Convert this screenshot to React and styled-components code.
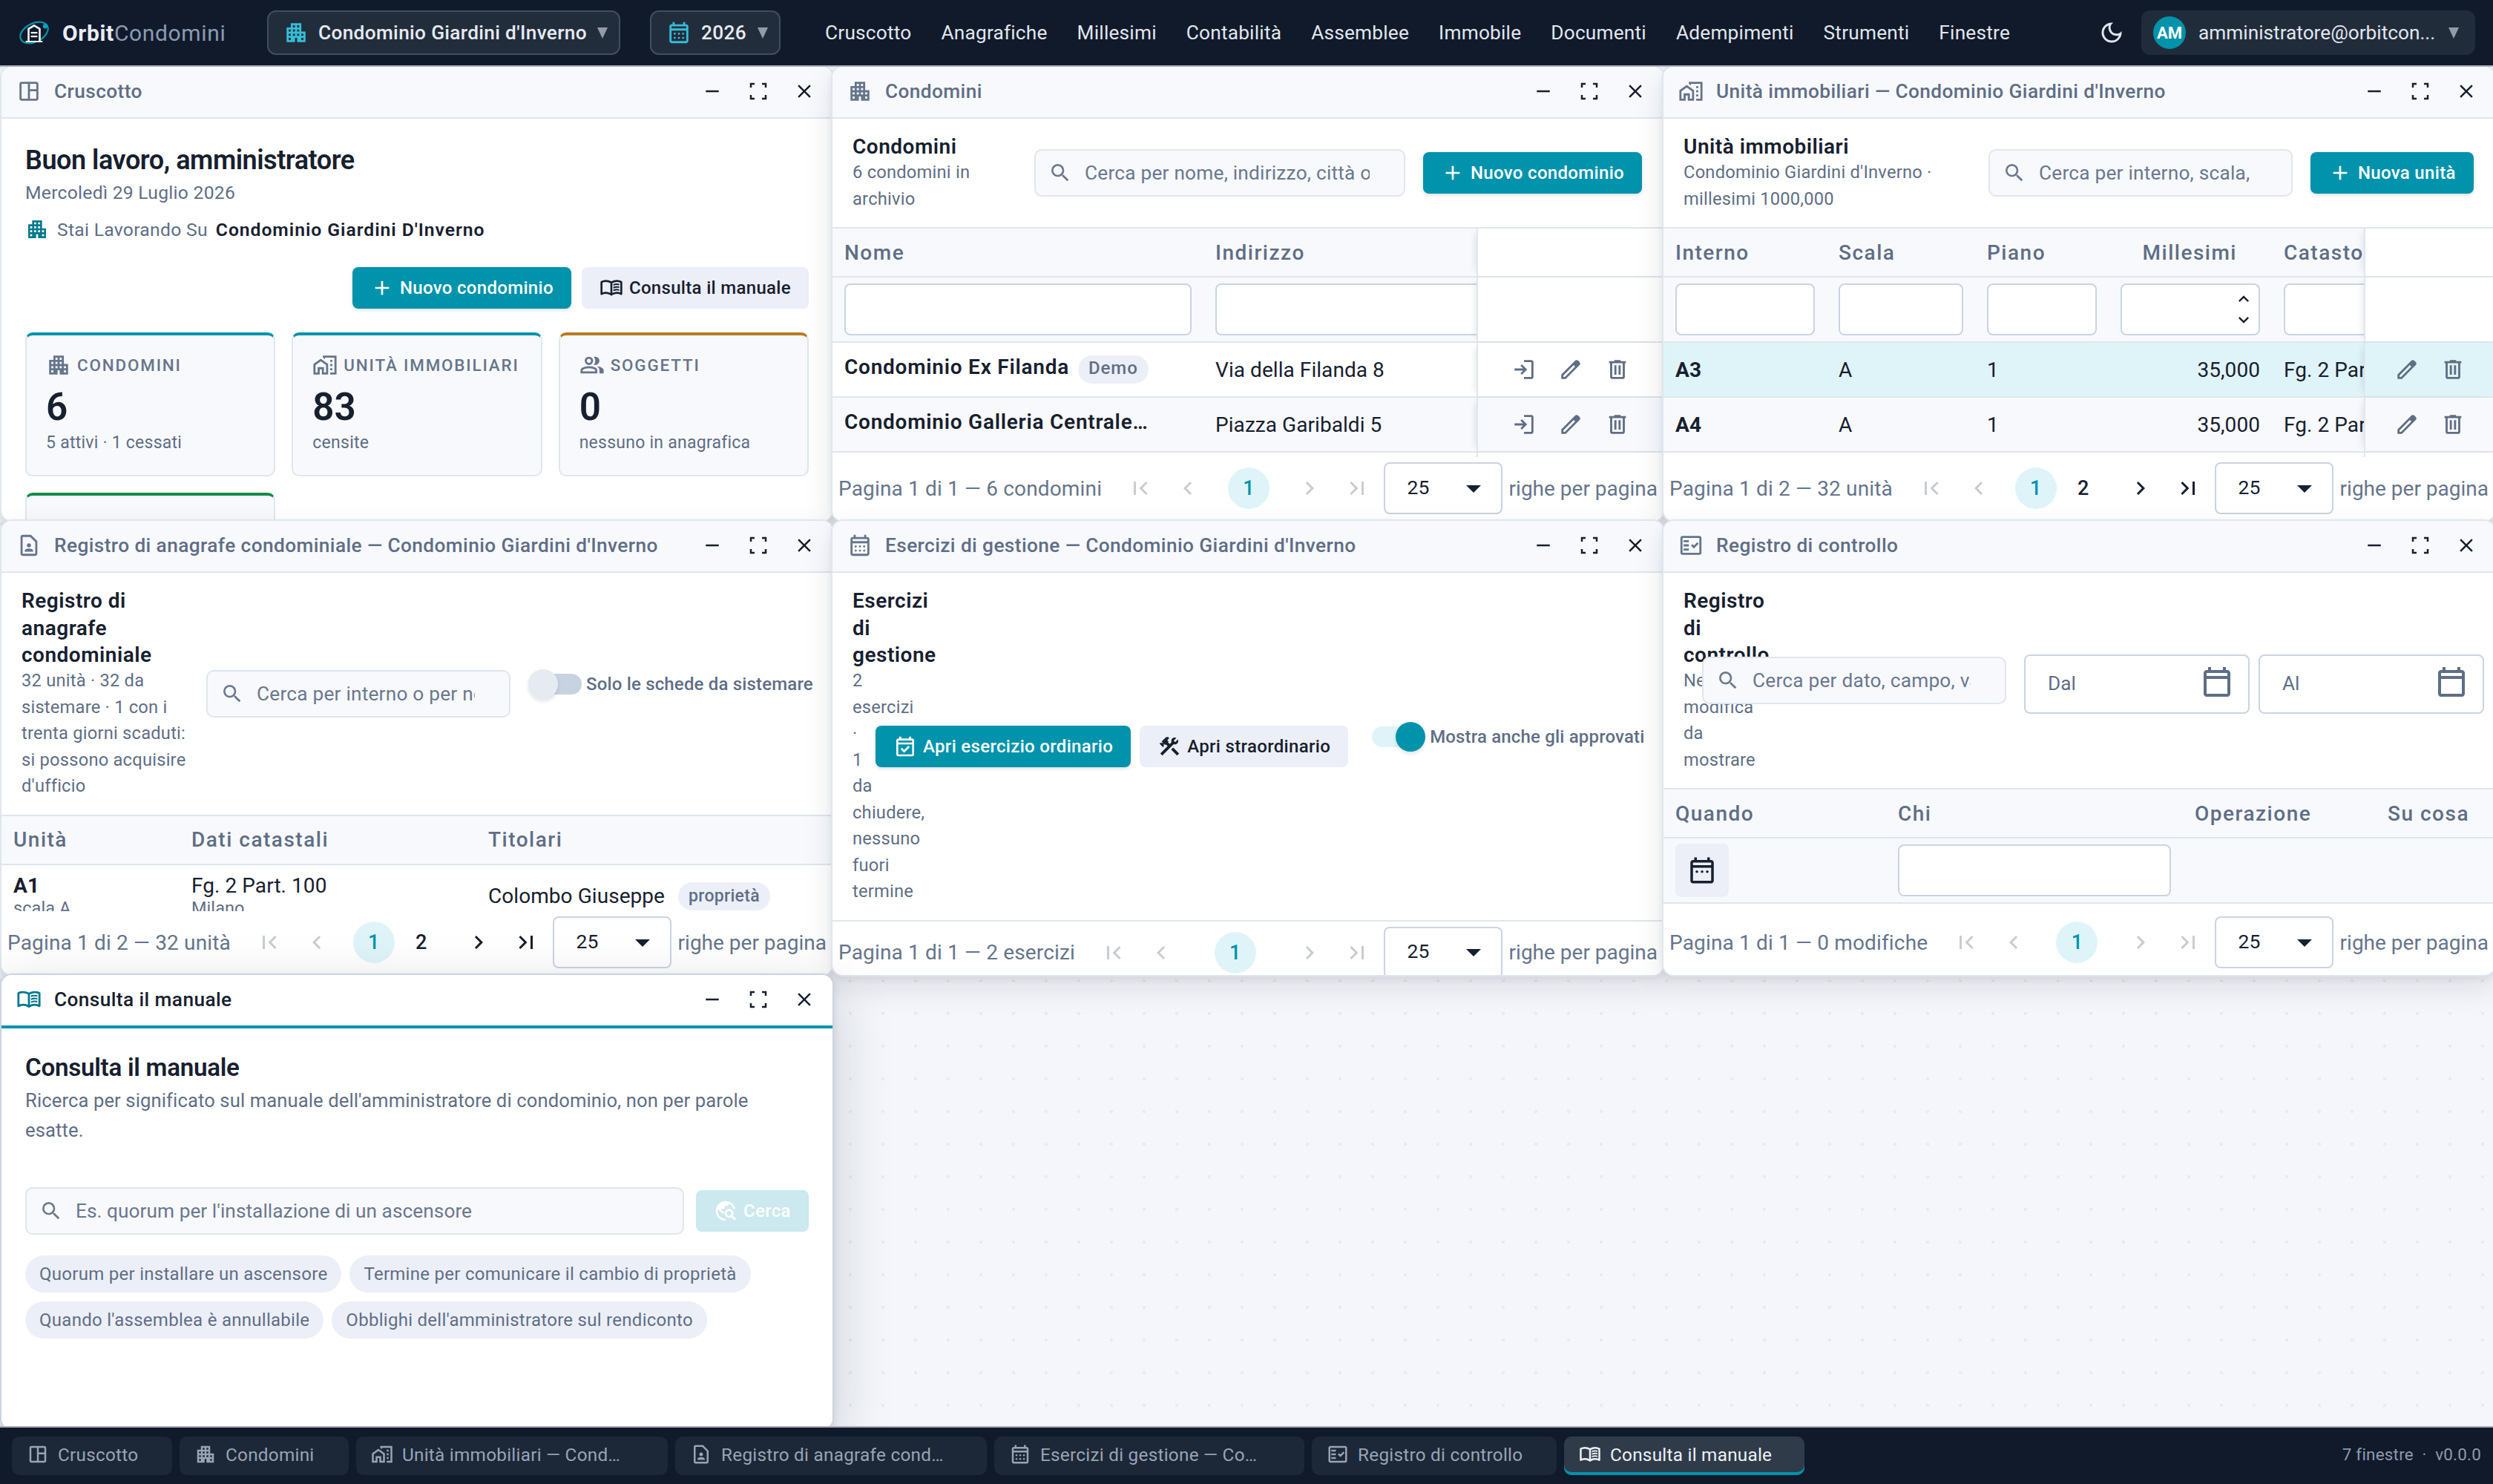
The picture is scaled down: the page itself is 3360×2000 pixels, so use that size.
import styled, { createGlobalStyle, css } from "styled-components";
import {
  MdApartment,
  MdOutlineSpaceDashboard,
  MdOutlineHomeWork,
  MdOutlineContactPage,
  MdOutlineFactCheck,
  MdSearch,
  MdAdd,
  MdConstruction,
  MdTravelExplore,
  MdFirstPage,
  MdLastPage,
  MdChevronLeft,
  MdChevronRight,
  MdArrowDropDown,
  MdExpandLess,
  MdExpandMore,
  MdOutlineDarkMode,
} from "react-icons/md";

const ink = "#17202e";
const muted = "#5f6e85";
const teal = "#0093ab";
const line = "#dfe6ee";
const soft = "#f8f9fd";
const pale = "#eceff8";
const field = "#c9d4e3";

const GlobalStyle = createGlobalStyle`
  * {
    box-sizing: border-box;
  }
  body {
    margin: 0;
    background: #f4f6fb;
    color: ${ink};
    font-family: Roboto, "Liberation Sans", sans-serif;
    font-size: 28px;
  }
  h1, h2, h3, p {
    margin: 0;
  }
  svg {
    display: block;
    flex: none;
  }
`;

/* ---------- icons ---------- */

const Glyph = ({ size = 34, children }) => (
  <svg width={size} height={size} viewBox="0 -960 960 960" fill="currentColor">
    {children}
  </svg>
);

const dot = (x, y) => <circle key={`${x}${y}`} cx={x} cy={y} r="40" />;

const CalendarFrame = () => (
  <path d="M200-80q-33 0-56.5-23.5T120-160v-560q0-33 23.5-56.5T200-800h40v-80h80v80h320v-80h80v80h40q33 0 56.5 23.5T840-720v560q0 33-23.5 56.5T760-80H200Zm0-80h560v-400H200v400Zm0-480h560v-80H200v80Z" />
);

const CalendarIcon = ({ size = 48 }) => (
  <Glyph size={size}>
    <CalendarFrame />
  </Glyph>
);

const MonthIcon = ({ size }) => (
  <Glyph size={size}>
    <CalendarFrame />
    {[-440, -280].map((y) => [320, 480, 640].map((x) => dot(x, y)))}
  </Glyph>
);

const RangeIcon = ({ size }) => (
  <Glyph size={size}>
    <CalendarFrame />
    {[320, 480, 640].map((x) => dot(x, -440))}
  </Glyph>
);

const CheckCalendarIcon = ({ size }) => (
  <Glyph size={size}>
    <CalendarFrame />
    <path d="m438-225-142-142 58-58 84 84 168-168 58 58-226 226Z" />
  </Glyph>
);

const BookIcon = ({ size }) => (
  <Glyph size={size}>
    <path d="M560-564v-68q33-14 67.5-21t72.5-7q26 0 51 4t49 10v64q-24-9-48.5-13.5T700-600q-38 0-73 9.5T560-564Zm0 220v-68q33-14 67.5-21t72.5-7q26 0 51 4t49 10v64q-24-9-48.5-13.5T700-380q-38 0-73 9t-67 27Zm0-110v-68q33-14 67.5-21t72.5-7q26 0 51 4t49 10v64q-24-9-48.5-13.5T700-490q-38 0-73 9.5T560-454ZM260-320q47 0 91.5 10.5T440-278v-394q-41-24-87-36t-93-12q-36 0-71.5 7T120-692v396q35-12 69.5-18t70.5-6Zm260 42q44-21 88.5-31.5T700-320q36 0 70.5 6t69.5 18v-396q-33-14-68.5-21t-71.5-7q-47 0-93 12t-87 36v394Zm-40 118q-48-38-104-59t-116-21q-42 0-82.5 11T100-198q-21 11-40.5-1T40-234v-482q0-11 5.5-21T62-752q46-24 96-36t102-12q58 0 113.5 15T480-740q51-30 106.5-45T700-800q52 0 102 12t96 36q11 5 16.5 15t5.5 21v482q0 23-19.5 35t-40.5 1q-37-20-77.5-31T700-240q-60 0-116 21t-104 59Z" />
  </Glyph>
);

const GroupIcon = ({ size }) => (
  <Glyph size={size}>
    <path d="M40-160v-112q0-34 17.5-62.5T104-378q62-31 126-46.5T360-440q66 0 130 15.5T616-378q29 15 46.5 43.5T680-272v112H40Zm720 0v-120q0-44-24.5-84.5T666-434q51 6 96 20.5t84 35.5q36 20 55 44.5t19 53.5v120H760ZM360-480q-66 0-113-47t-47-113q0-66 47-113t113-47q66 0 113 47t47 113q0 66-47 113t-113 47Zm400-160q0 66-47 113t-113 47q-11 0-28-2.5t-28-5.5q27-32 41.5-71t14.5-81q0-42-14.5-81T544-792q14-5 28-6.5t28-1.5q66 0 113 47t47 113ZM120-240h480v-32q0-11-5.5-20T580-306q-54-27-109-40.5T360-360q-56 0-111 13.5T140-306q-9 5-14.5 14t-5.5 20v32Zm240-320q33 0 56.5-23.5T440-640q0-33-23.5-56.5T360-720q-33 0-56.5 23.5T280-640q0 33 23.5 56.5T360-560Z" />
  </Glyph>
);

const MinimizeIcon = () => (
  <Glyph size={30}>
    <path d="M200-440v-80h560v80H200Z" />
  </Glyph>
);

const MaximizeIcon = () => (
  <Glyph size={30}>
    <path d="M120-120v-200h80v120h120v80H120Zm520 0v-80h120v-120h80v200H640ZM120-640v-200h200v80H200v120h-80Zm640 0v-120H640v-80h200v200h-80Z" />
  </Glyph>
);

const CloseIcon = () => (
  <Glyph size={30}>
    <path d="m256-200-56-56 224-224-224-224 56-56 224 224 224-224 56 56-224 224 224 224-56 56-224-224-224 224Z" />
  </Glyph>
);

const EnterIcon = () => (
  <Glyph>
    <path d="M480-120v-80h280v-560H480v-80h280q33 0 56.5 23.5T840-760v560q0 33-23.5 56.5T760-120H480Zm-80-160-55-58 102-102H120v-80h327L345-622l55-58 200 200-200 200Z" />
  </Glyph>
);

const EditIcon = () => (
  <Glyph>
    <path d="M200-200h57l391-391-57-57-391 391v57Zm-80 80v-170l528-527q12-11 26.5-17t30.5-6q16 0 31 6t26 18l55 56q12 11 17.5 26t5.5 30q0 16-5.5 30.5T817-647L290-120H120Zm640-584-56-56 56 56Zm-141 85-28-29 57 57-29-28Z" />
  </Glyph>
);

const DeleteIcon = () => (
  <Glyph>
    <path d="M280-120q-33 0-56.5-23.5T200-200v-520h-40v-80h200v-40h240v40h200v80h-40v520q0 33-23.5 56.5T680-120H280Zm400-600H280v520h400v-520ZM360-280h80v-360h-80v360Zm160 0h80v-360h-80v360Z" />
  </Glyph>
);

const Logo = () => (
  <svg width="40" height="40" viewBox="0 0 40 40" fill="none">
    <ellipse cx="20" cy="20" rx="20" ry="12.4" transform="rotate(-27 20 20)" stroke="#0795ad" strokeWidth="2.2" />
    <circle cx="35" cy="11.3" r="3.2" fill="#0ba3bd" />
    <path d="M12.5 31.5V14.8L20 10.4l7.5 4.4v16.7" fill="#101a2b" stroke="#f1f4f8" strokeWidth="2.6" strokeLinejoin="round" />
    <path d="M9.5 32h21M16.5 20.2h7M16.5 25.2h7" stroke="#f1f4f8" strokeWidth="2.2" strokeLinecap="round" />
  </svg>
);

const Caret = () => (
  <svg width="14" height="15" viewBox="0 0 14 15" fill="#949ba6">
    <path d="M0 0h14L7 15z" />
  </svg>
);

/* ---------- top bar ---------- */

const Shell = styled.div`
  width: 3360px;
  height: 2000px;
  display: flex;
  flex-direction: column;
  overflow: hidden;
`;

const TopBar = styled.header`
  height: 88px;
  flex: none;
  display: flex;
  align-items: center;
  padding: 0 24px 0 26px;
  background: #101a2b;
  color: #e1e6ee;
  font-size: 26.24px;
  letter-spacing: 0.21px;
  position: relative;
  z-index: 20;
  box-shadow: 0 2px 0 #a8acb3;
`;

const Brand = styled.div`
  width: 334px;
  display: flex;
  align-items: center;
  gap: 18px;
  font-size: 30px;
  letter-spacing: 0.65px;
  color: #8b9ab3;

  b {
    color: #e9edf4;
  }
`;

const Picker = styled.button`
  height: 60px;
  width: ${(p) => p.$w}px;
  margin-right: 40px;
  padding: 0 15px 0 20px;
  display: flex;
  align-items: center;
  gap: 13px;
  border: 2px solid #434e5c;
  border-radius: 12px;
  background: #222d3c;
  color: #e6eaf1;
  font: inherit;
  font-weight: 470;
  letter-spacing: 0.33px;
  white-space: nowrap;

  > svg:first-child {
    color: #35bdd7;
  }
  > svg:last-child {
    margin-left: auto;
  }
`;

const Nav = styled.nav`
  display: flex;
  flex: 1;

  a {
    padding: 0 20px;
  }
`;

const User = styled.div`
  width: 450px;
  height: 60px;
  margin-left: 22px;
  padding: 0 22px 0 16px;
  display: flex;
  align-items: center;
  background: #212c3b;
  border-radius: 12px;
  letter-spacing: 0;

  > svg {
    margin-left: auto;
  }
`;

const Avatar = styled.span`
  width: 44px;
  height: 44px;
  margin-right: 17px;
  border-radius: 50%;
  display: grid;
  place-items: center;
  background: ${teal};
  color: #fff;
  font-size: 22px;
  font-weight: 700;
`;

/* ---------- desktop and windows ---------- */

const Desktop = styled.main`
  flex: 1;
  position: relative;
  background: radial-gradient(circle at 2px 2px, #e8eaee 2px, transparent 2.4px) 0 0 / 44px 44px #f4f6fb;
`;

const Frame = styled.section`
  position: absolute;
  left: ${(p) => p.$col * 1120}px;
  top: ${(p) => p.$row * 612}px;
  width: 1124px;
  height: 616px;
  display: flex;
  flex-direction: column;
  overflow: hidden;
  background: #fff;
  border: 2px solid ${(p) => (p.$active ? "#c9d4e3" : line)};
  border-radius: 16px;
  box-shadow: ${(p) =>
    p.$active
      ? "0 4px 12px rgba(16, 24, 40, 0.08), 0 24px 80px rgba(16, 24, 40, 0.18)"
      : "0 4px 8px rgba(16, 24, 40, 0.06), 0 16px 40px rgba(16, 24, 40, 0.1)"};
`;

const TitleBar = styled.div`
  flex: none;
  height: ${(p) => (p.$active ? 72 : 70)}px;
  padding: 0 8px 2px 20px;
  display: flex;
  align-items: center;
  gap: 17px;
  border-bottom: ${(p) => (p.$active ? `4px solid ${teal}` : `2px solid ${line}`)};
  background: ${(p) => (p.$active ? "#fff" : soft)};
  color: ${(p) => (p.$active ? ink : muted)};
  font-size: 26.24px;
  font-weight: ${(p) => (p.$active ? 520 : 470)};
  letter-spacing: 0.41px;

  > svg {
    color: ${(p) => (p.$active ? "#067a8c" : "#66758b")};
  }
`;

const Controls = styled.div`
  margin-left: auto;
  display: flex;
  gap: 2px;
  color: ${ink};

  span {
    width: 60px;
    display: grid;
    place-items: center;
  }
`;

function Window({ icon: Icon, title, col, row, active, children }) {
  return (
    <Frame $col={col} $row={row} $active={active}>
      <TitleBar $active={active}>
        <Icon size={34} />
        {title}
        <Controls>
          <span><MinimizeIcon /></span>
          <span><MaximizeIcon /></span>
          <span><CloseIcon /></span>
        </Controls>
      </TitleBar>
      {children}
    </Frame>
  );
}

/* ---------- shared parts ---------- */

const Button = styled.button`
  height: 56px;
  flex: none;
  padding: 0 24px;
  display: flex;
  align-items: center;
  gap: 8px;
  border: 0;
  border-radius: 8px;
  font: 470 24px Roboto, sans-serif;
  letter-spacing: 0.32px;
  white-space: nowrap;
  background: ${pale};
  color: ${ink};

  ${(p) =>
    p.$primary &&
    css`
      background: ${teal};
      color: #fff;
      box-shadow: 0 2px 5px rgba(16, 24, 40, 0.14);
    `}
  ${(p) =>
    p.$disabled &&
    css`
      width: 152px;
      background: #cbe9ee;
      color: #fff;
    `}
`;

const SearchField = styled.div`
  height: 64px;
  width: ${(p) => p.$w}px;
  flex: none;
  padding: 0 46px 0 17px;
  display: flex;
  align-items: center;
  gap: 17px;
  border: 2px solid ${line};
  border-radius: 10px;
  background: ${soft};
  color: #6a788e;
  font-size: 26.24px;
  letter-spacing: ${(p) => (p.$w > 500 ? 0.05 : 0.22)}px;

  span {
    flex: 1;
    overflow: hidden;
    white-space: nowrap;
  }
`;

const Search = ({ width, children }) => (
  <SearchField $w={width}>
    <MdSearch size={32} />
    <span>{children}</span>
  </SearchField>
);

const Chip = styled.span`
  height: 38px;
  padding: 0 14px;
  display: inline-flex;
  align-items: center;
  border-radius: 19px;
  background: ${pale};
  color: ${muted};
  font-size: 23px;
  font-weight: 500;
  letter-spacing: 0.3px;
`;

const ToolBar = styled.div`
  flex: none;
  display: flex;
  align-items: center;
  padding: 20px 0 20px 27px;
  border-bottom: 2px solid ${line};
`;

const Titles = styled.div`
  width: ${(p) => p.$w}px;
  flex: none;
  padding-right: 24px;

  h2 {
    font-size: 28px;
    font-weight: 600;
    line-height: 36.5px;
    letter-spacing: 0.5px;
  }
  p {
    margin-top: -1.5px;
    font-size: 23.7px;
    line-height: 35.5px;
    letter-spacing: 0.22px;
    color: ${muted};
  }
`;

const Tools = styled.div`
  flex: none;
  display: flex;
  align-items: center;
  gap: ${(p) => p.$gap || 24}px;
  position: relative;
`;

const SwitchLabel = styled.label`
  display: flex;
  align-items: center;
  gap: ${(p) => (p.$on ? 6 : 0)}px;
  margin: 0 0 25px ${(p) => (p.$on ? 12 : 0)}px;
  font-size: 24px;
  font-weight: 500;
  letter-spacing: 0.17px;
  color: ${muted};
  white-space: nowrap;
`;

const Track = styled.span`
  width: 64px;
  height: 28px;
  margin: 0 8px;
  margin-right: ${(p) => (p.$on ? 8 : 6)}px;
  border-radius: 14px;
  display: flex;
  align-items: center;
  justify-content: ${(p) => (p.$on ? "flex-end" : "flex-start")};
  background: ${(p) => (p.$on ? "#dff4f8" : "#c8d3e1")};

  &::after {
    content: "";
    width: 40px;
    height: 40px;
    flex: none;
    margin: 0 -8px;
    border-radius: 50%;
    background: ${(p) => (p.$on ? teal : "#e6ebf2")};
    box-shadow: 0 3px 5px rgba(16, 24, 40, 0.12);
  }
`;

const DateField = styled.div`
  width: 304px;
  height: 80px;
  margin-top: 10px;
  padding: 0 18px 2px 30px;
  display: flex;
  align-items: center;
  justify-content: space-between;
  border: 2px solid ${field};
  border-radius: 8px;
  background: #fff;
  color: ${muted};
  font-size: 26.24px;

  svg {
    margin-top: -4px;
  }
`;

/* ---------- table ---------- */

const Table = styled.div`
  flex: 1;
  min-height: 0;
  overflow: hidden;
  display: flex;
  flex-direction: column;
`;

const Row = styled.div`
  flex: none;
  height: ${(p) => p.$h || 74}px;
  display: flex;
  border-bottom: 2px solid ${line};
  background: ${(p) => p.$bg || "#fff"};
`;

const Cells = styled.div`
  flex: 1;
  min-width: 0;
  overflow: hidden;
  display: grid;
  grid-template-columns: ${(p) => p.$cols};
  align-items: center;
  white-space: nowrap;
  letter-spacing: 0.06px;
  ${(p) =>
    p.$head &&
    css`
      color: ${muted};
      font-weight: 470;
      letter-spacing: 1.5px;
    `}
`;

const Cell = styled.div`
  padding: 0 16px;
  text-align: ${(p) => (p.$right ? "right" : "left")};
  padding-right: ${(p) => p.$pad || 16}px;

  b {
    font-weight: 700;
    letter-spacing: 0.28px;
  }
`;

const NameCell = styled.div`
  padding: 0 16px;
  height: 38px;
  display: flex;
  align-items: center;
  line-height: 32px;

  b {
    font-weight: 650;
    letter-spacing: 0.76px;
    position: relative;
    top: -3px;
  }
  ${Chip} {
    margin-left: 12px;
    line-height: 30px;
    padding-bottom: 4px;
    font-size: 24px;
    letter-spacing: 0.9px;
  }
`;

const TwoLines = styled(Cell)`
  line-height: 30px;

  small {
    display: block;
    font-size: 23.5px;
    color: ${muted};
  }
`;

const Owner = styled(Cell)`
  display: flex;
  align-items: center;
  gap: 18px;
  line-height: 34px;
  margin-top: -2px;
`;

const Pinned = styled.div`
  width: ${(p) => p.$w}px;
  flex: none;
  display: flex;
  align-items: center;
  justify-content: center;
  border-left: 2px solid ${line};
  background: ${(p) => p.$bg || "#fff"};
  box-shadow: -6px 0 10px -6px rgba(16, 24, 40, 0.14);
  color: ${muted};

  svg {
    margin: 0 14.3px;
  }
`;

const FilterInput = styled.div`
  height: 70px;
  border: 2px solid ${field};
  border-radius: 8px;
  background: #fff;
  display: flex;
  flex-direction: column;
  align-items: flex-end;
  justify-content: center;
  padding-right: 6px;
  color: ${ink};
`;

const FilterButton = styled.div`
  width: 72px;
  height: 72px;
  border-radius: 8px;
  display: grid;
  place-items: center;
  background: ${pale};
  color: ${ink};
`;

/* ---------- pager ---------- */

const PagerBar = styled.div`
  height: 86px;
  flex: none;
  padding: 0 8px 2px 8px;
  display: flex;
  align-items: center;
  color: #66758b;
  white-space: nowrap;
`;

const Step = styled.span`
  width: 64px;
  display: grid;
  place-items: center;
  color: ${(p) => (p.$on ? ink : "#c9ccd2")};
`;

const Pages = styled.div`
  flex: 1;
  display: flex;
  justify-content: center;
  gap: 8px;

  span {
    width: 56px;
    height: 56px;
    border-radius: 50%;
    display: grid;
    place-items: center;
    color: ${ink};
    font-weight: 500;
    font-size: 27px;
  }
  span:first-child {
    background: #dff4f8;
    color: ${teal};
  }
`;

const PageSize = styled.div`
  width: 160px;
  height: 70px;
  margin: 0 9px 0 4px;
  padding: 0 13px 4px 30px;
  display: flex;
  align-items: center;
  justify-content: space-between;
  border: 2px solid ${field};
  border-radius: 8px;
  color: ${ink};
  font-size: 26.5px;

  svg {
    margin-top: 3px;
  }
`;

const Count = styled.span`
  margin-right: 20px;
  letter-spacing: 0.16px;
`;

function Pager({ count, pages = 1 }) {
  const more = pages > 1;
  return (
    <PagerBar>
      <Count>Pagina 1 di {pages} — {count}</Count>
      <Step><MdFirstPage size={36} /></Step>
      <Step><MdChevronLeft size={36} /></Step>
      <Pages>
        <span>1</span>
        {more && <span>2</span>}
      </Pages>
      <Step $on={more}><MdChevronRight size={36} /></Step>
      <Step $on={more}><MdLastPage size={36} /></Step>
      <PageSize>
        25
        <MdArrowDropDown size={48} />
      </PageSize>
      righe per pagina
    </PagerBar>
  );
}

/* ---------- dashboard ---------- */

const Page = styled.div`
  padding: 32px;
`;

const Greeting = styled.h1`
  font-size: 36px;
  font-weight: 600;
  line-height: 47px;
  letter-spacing: -0.46px;
  position: relative;
  top: 1px;
`;

const Today = styled.p`
  font-size: 24.7px;
  line-height: 41px;
  letter-spacing: 0.26px;
  color: ${muted};
`;

const WorkingOn = styled.div`
  height: 38px;
  margin-top: 10px;
  display: flex;
  align-items: center;
  gap: 11px;
  font-size: 24.7px;
  letter-spacing: 0.28px;
  color: ${muted};

  svg {
    color: #067a8c;
  }
  b {
    font-weight: 650;
    letter-spacing: 0.96px;
    color: ${ink};
  }
`;

const Actions = styled.div`
  margin: 32px 0;
  display: flex;
  justify-content: flex-end;
  gap: 14px;
`;

const Stats = styled.div`
  display: grid;
  grid-template-columns: repeat(3, 1fr);
  gap: 22px;
`;

const Stat = styled.div`
  height: 194px;
  padding: 23px 0 0 26px;
  border: 2px solid ${line};
  border-top: 4px solid ${(p) => p.$accent};
  border-radius: 10px;
  background: ${soft};
`;

const StatLabel = styled.div`
  height: 34px;
  display: flex;
  align-items: center;
  gap: 8px;
  font-size: 22.4px;
  font-weight: 500;
  letter-spacing: 1.85px;
  color: #66758b;
  white-space: nowrap;
`;

const StatValue = styled.div`
  margin-top: 10px;
  font-size: 51.2px;
  font-weight: 600;
  line-height: 60px;
`;

const StatNote = styled.div`
  margin-top: 1px;
  font-size: 23px;
  line-height: 34px;
  letter-spacing: 0.25px;
  color: ${muted};
`;

function Dashboard() {
  return (
    <Page>
      <Greeting>Buon lavoro, amministratore</Greeting>
      <Today>Mercoledì 29 Luglio 2026</Today>
      <WorkingOn>
        <MdApartment size={32} />
        Stai Lavorando Su <b>Condominio Giardini D'Inverno</b>
      </WorkingOn>
      <Actions>
        <Button $primary><MdAdd size={32} />Nuovo condominio</Button>
        <Button><BookIcon size={32} />Consulta il manuale</Button>
      </Actions>
      <Stats>
        <Stat $accent={teal}>
          <StatLabel><MdApartment size={34} />CONDOMINI</StatLabel>
          <StatValue>6</StatValue>
          <StatNote>5 attivi · 1 cessati</StatNote>
        </Stat>
        <Stat $accent={teal}>
          <StatLabel><MdOutlineHomeWork size={34} />UNITÀ IMMOBILIARI</StatLabel>
          <StatValue>83</StatValue>
          <StatNote>censite</StatNote>
        </Stat>
        <Stat $accent="#b87a1e">
          <StatLabel><GroupIcon size={34} />SOGGETTI</StatLabel>
          <StatValue>0</StatValue>
          <StatNote>nessuno in anagrafica</StatNote>
        </Stat>
        <Stat $accent="#178a4a" />
      </Stats>
    </Page>
  );
}

/* ---------- list windows ---------- */

const condoCols = "500px 500px";

function Condomini() {
  return (
    <>
      <ToolBar>
        <Titles $w={245}>
          <h2>Condomini</h2>
          <p>6 condomini in archivio</p>
        </Titles>
        <Tools>
          <Search width={500}>Cerca per nome, indirizzo, città o codice</Search>
          <Button $primary><MdAdd size={32} />Nuovo condominio</Button>
        </Tools>
      </ToolBar>
      <Table>
        <Row $h={66} $bg={soft}>
          <Cells $cols={condoCols} $head>
            <Cell>Nome</Cell>
            <Cell>Indirizzo</Cell>
          </Cells>
          <Pinned $w={252} />
        </Row>
        <Row $h={88} $bg={soft}>
          <Cells $cols={condoCols}>
            <Cell><FilterInput /></Cell>
            <Cell><FilterInput /></Cell>
          </Cells>
          <Pinned $w={252} />
        </Row>
        <Row>
          <Cells $cols={condoCols}>
            <NameCell><b>Condominio Ex Filanda</b><Chip>Demo</Chip></NameCell>
            <Cell>Via della Filanda 8</Cell>
          </Cells>
          <Pinned $w={252}><EnterIcon /><EditIcon /><DeleteIcon /></Pinned>
        </Row>
        <Row $bg={soft}>
          <Cells $cols={condoCols}>
            <NameCell><b>Condominio Galleria Centrale…</b></NameCell>
            <Cell>Piazza Garibaldi 5</Cell>
          </Cells>
          <Pinned $w={252} $bg={soft}><EnterIcon /><EditIcon /><DeleteIcon /></Pinned>
        </Row>
        <Row>
          <Cells />
          <Pinned $w={252} />
        </Row>
      </Table>
      <Pager count="6 condomini" />
    </>
  );
}

const unitCols = "220px 200px 180px 220px 300px";

const units = [
  { name: "A3", bg: "#dff4f8" },
  { name: "A4", bg: soft },
];

function Unita() {
  return (
    <>
      <ToolBar>
        <Titles $w={411}>
          <h2>Unità immobiliari</h2>
          <p>Condominio Giardini d'Inverno · millesimi 1000,000</p>
        </Titles>
        <Tools>
          <Search width={410}>Cerca per interno, scala,</Search>
          <Button $primary><MdAdd size={32} />Nuova unità</Button>
        </Tools>
      </ToolBar>
      <Table>
        <Row $h={66} $bg={soft}>
          <Cells $cols={unitCols} $head>
            <Cell>Interno</Cell>
            <Cell>Scala</Cell>
            <Cell>Piano</Cell>
            <Cell $right $pad={47}>Millesimi</Cell>
            <Cell>Catasto</Cell>
          </Cells>
          <Pinned $w={176} />
        </Row>
        <Row $h={88} $bg={soft}>
          <Cells $cols={unitCols}>
            <Cell><FilterInput /></Cell>
            <Cell><FilterInput /></Cell>
            <Cell><FilterInput /></Cell>
            <Cell>
              <FilterInput>
                <MdExpandLess size={28} />
                <MdExpandMore size={28} />
              </FilterInput>
            </Cell>
            <Cell><FilterInput /></Cell>
          </Cells>
          <Pinned $w={176} />
        </Row>
        {units.map((unit) => (
          <Row key={unit.name} $bg={unit.bg}>
            <Cells $cols={unitCols}>
              <Cell><b>{unit.name}</b></Cell>
              <Cell>A</Cell>
              <Cell>1</Cell>
              <Cell $right>35,000</Cell>
              <Cell>Fg. 2 Part. 100</Cell>
            </Cells>
            <Pinned $w={176} $bg={unit.bg}><EditIcon /><DeleteIcon /></Pinned>
          </Row>
        ))}
        <Row>
          <Cells />
          <Pinned $w={176} />
        </Row>
      </Table>
      <Pager count="32 unità" pages={2} />
    </>
  );
}

const registryCols = "240px 400px 480px";

function Anagrafe() {
  return (
    <>
      <ToolBar>
        <Titles $w={249}>
          <h2>Registro di anagrafe condominiale</h2>
          <p>32 unità · 32 da sistemare · 1 con i trenta giorni scaduti: si possono acquisire d'ufficio</p>
        </Titles>
        <Tools>
          <Search width={410}>Cerca per interno o per nome</Search>
          <SwitchLabel><Track />Solo le schede da sistemare</SwitchLabel>
        </Tools>
      </ToolBar>
      <Table>
        <Row $h={66} $bg={soft}>
          <Cells $cols={registryCols} $head>
            <Cell>Unità</Cell>
            <Cell>Dati catastali</Cell>
            <Cell>Titolari</Cell>
          </Cells>
        </Row>
        <Row $h={88}>
          <Cells $cols={registryCols}>
            <TwoLines><b>A1</b><small>scala A</small></TwoLines>
            <TwoLines>Fg. 2 Part. 100<small>Milano</small></TwoLines>
            <Owner>Colombo Giuseppe<Chip>proprietà</Chip></Owner>
          </Cells>
        </Row>
      </Table>
      <Pager count="32 unità" pages={2} />
    </>
  );
}

function Esercizi() {
  return (
    <>
      <ToolBar>
        <Titles $w={31}>
          <h2>Esercizi di gestione</h2>
          <p>2 esercizi · 1 da chiudere, nessuno fuori termine</p>
        </Titles>
        <Tools $gap={12}>
          <Button $primary><CheckCalendarIcon size={32} />Apri esercizio ordinario</Button>
          <Button><MdConstruction size={32} />Apri straordinario</Button>
          <SwitchLabel $on><Track $on />Mostra anche gli approvati</SwitchLabel>
        </Tools>
      </ToolBar>
      <Table />
      <Pager count="2 esercizi" />
    </>
  );
}

const auditCols = "300px 400px 260px 200px";

function Controllo() {
  return (
    <>
      <ToolBar>
        <Titles $w={25}>
          <h2>Registro di controllo</h2>
          <p>Nessuna modifica da mostrare</p>
        </Titles>
        <Tools $gap={12}>
          <Search width={410}>Cerca per dato, campo, valore</Search>
          <span />
          <DateField>Dal<CalendarIcon /></DateField>
          <DateField>Al<CalendarIcon /></DateField>
        </Tools>
      </ToolBar>
      <Table>
        <Row $h={66} $bg={soft}>
          <Cells $cols={auditCols} $head>
            <Cell>Quando</Cell>
            <Cell>Chi</Cell>
            <Cell>Operazione</Cell>
            <Cell>Su cosa</Cell>
          </Cells>
        </Row>
        <Row $h={88} $bg={soft}>
          <Cells $cols={auditCols}>
            <Cell><FilterButton><RangeIcon size={42} /></FilterButton></Cell>
            <Cell><FilterInput /></Cell>
          </Cells>
        </Row>
      </Table>
      <Pager count="0 modifiche" />
    </>
  );
}

/* ---------- manual ---------- */

const ManualTitle = styled.h1`
  font-size: 33.2px;
  font-weight: 600;
  line-height: 42px;
  letter-spacing: -0.28px;
`;

const Lead = styled.p`
  margin-top: 3px;
  font-size: 25.6px;
  line-height: 40px;
  letter-spacing: 0.11px;
  color: ${muted};
`;

const Ask = styled.div`
  margin: 57px 0 28px;
  display: flex;
  align-items: center;
  justify-content: space-between;
`;

const Hints = styled.div`
  display: flex;
  flex-wrap: wrap;
  gap: 12px 11px;
`;

const Hint = styled(Chip)`
  height: 50px;
  padding: 0 19px;
  border-radius: 25px;
  font-size: 24px;
  font-weight: 400;
  letter-spacing: 0.28px;
`;

function Manuale() {
  return (
    <Page>
      <ManualTitle>Consulta il manuale</ManualTitle>
      <Lead>
        Ricerca per significato sul manuale dell'amministratore di condominio, non per parole esatte.
      </Lead>
      <Ask>
        <Search width={888}>Es. quorum per l'installazione di un ascensore</Search>
        <Button $disabled><MdTravelExplore size={32} />Cerca</Button>
      </Ask>
      <Hints>
        <Hint>Quorum per installare un ascensore</Hint>
        <Hint>Termine per comunicare il cambio di proprietà</Hint>
        <Hint>Quando l'assemblea è annullabile</Hint>
        <Hint>Obblighi dell'amministratore sul rendiconto</Hint>
      </Hints>
    </Page>
  );
}

/* ---------- task bar ---------- */

const TaskBar = styled.footer`
  height: 76px;
  flex: none;
  padding: 0 16px;
  display: flex;
  align-items: center;
  gap: 10px;
  background: #101a2b;
  position: relative;
  z-index: 20;
  box-shadow: 0 -2px 0 #a8acb3;
`;

const Task = styled.div`
  width: ${(p) => p.$w}px;
  height: 52px;
  padding: 0 0 4px 20px;
  display: flex;
  align-items: center;
  gap: 12px;
  border-radius: 10px;
  background: #1c2737;
  color: #98a4b5;
  font-size: 24.3px;
  letter-spacing: 0.26px;

  span {
    max-width: 304px;
    overflow: hidden;
    white-space: nowrap;
    text-overflow: ellipsis;
  }
  ${(p) =>
    p.$active &&
    css`
      background: #303b4a;
      color: #edf1f6;
      box-shadow: inset 0 -4px 0 ${teal};
    `}
`;

const Status = styled.div`
  margin-left: auto;
  padding-bottom: 4px;
  font-size: 22.4px;
  letter-spacing: 0.24px;
  color: #8e9aac;
  white-space: pre;
`;

const menu = [
  "Cruscotto",
  "Anagrafiche",
  "Millesimi",
  "Contabilità",
  "Assemblee",
  "Immobile",
  "Documenti",
  "Adempimenti",
  "Strumenti",
  "Finestre",
];

const windows = [
  { title: "Cruscotto", icon: MdOutlineSpaceDashboard, body: Dashboard, task: 216 },
  { title: "Condomini", icon: MdApartment, body: Condomini, task: 228 },
  { title: "Unità immobiliari — Condominio Giardini d'Inverno", icon: MdOutlineHomeWork, body: Unita, task: 420 },
  {
    title: "Registro di anagrafe condominiale — Condominio Giardini d'Inverno",
    icon: MdOutlineContactPage,
    body: Anagrafe,
    task: 420,
  },
  { title: "Esercizi di gestione — Condominio Giardini d'Inverno", icon: MonthIcon, body: Esercizi, task: 418 },
  { title: "Registro di controllo", icon: MdOutlineFactCheck, body: Controllo, task: 330 },
  { title: "Consulta il manuale", icon: BookIcon, body: Manuale, task: 324, active: true },
];

function App() {
  return (
    <Shell>
      <GlobalStyle />
      <TopBar>
        <Brand>
          <Logo />
          <span><b>Orbit</b>Condomini</span>
        </Brand>
        <Picker $w={476}><MdApartment size={34} />Condominio Giardini d'Inverno<Caret /></Picker>
        <Picker $w={176}><MonthIcon size={34} />2026<Caret /></Picker>
        <Nav>
          {menu.map((item) => (
            <a key={item}>{item}</a>
          ))}
        </Nav>
        <MdOutlineDarkMode size={36} />
        <User>
          <Avatar>AM</Avatar>
          amministratore@orbitcon...
          <Caret />
        </User>
      </TopBar>

      <Desktop>
        {windows.map(({ title, icon, body: Body, active }, i) => (
          <Window key={title} title={title} icon={icon} col={i % 3} row={Math.floor(i / 3)} active={active}>
            <Body />
          </Window>
        ))}
      </Desktop>

      <TaskBar>
        {windows.map(({ title, icon: Icon, task, active }) => (
          <Task key={title} $w={task} $active={active}>
            <Icon size={30} />
            <span>{title}</span>
          </Task>
        ))}
        <Status>7 finestre  ·  v0.0.0</Status>
      </TaskBar>
    </Shell>
  );
}

export default App;
